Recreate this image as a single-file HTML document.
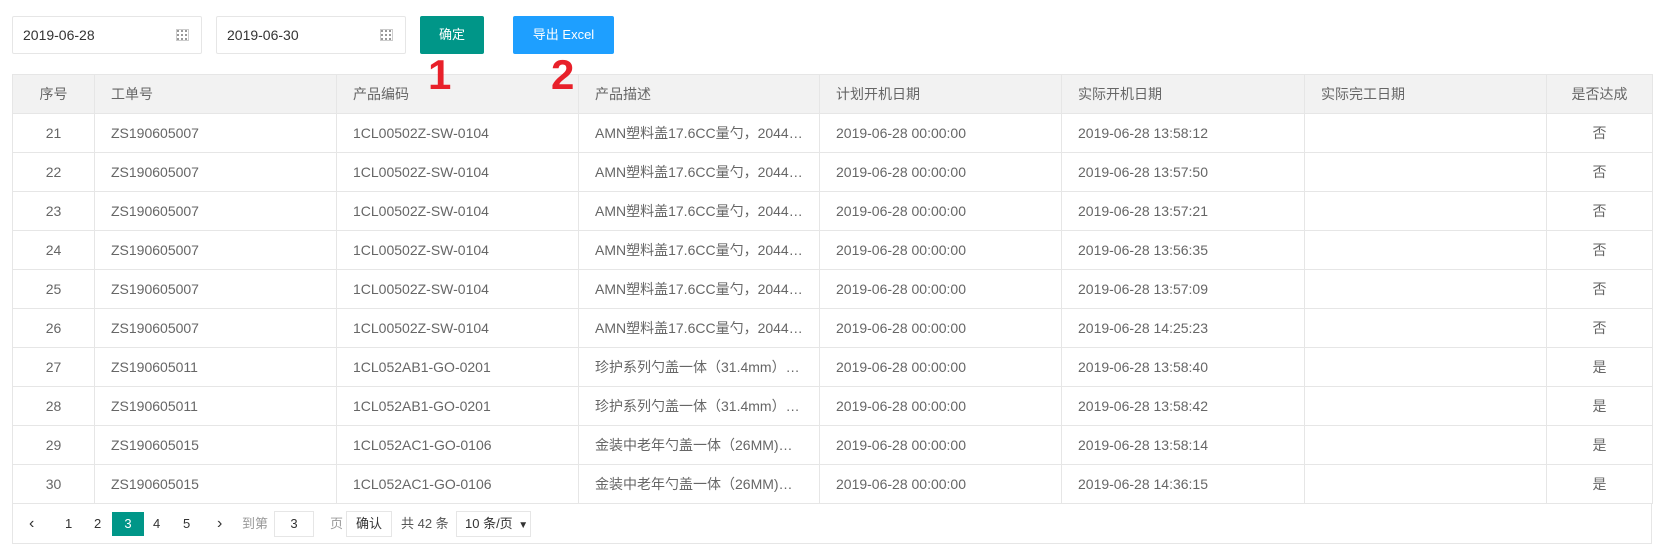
<!DOCTYPE html>
<html><head><meta charset="utf-8"><style>
*{box-sizing:border-box;margin:0;padding:0}
body{width:1666px;height:552px;background:#fff;font-family:"Liberation Sans","Noto Sans CJK SC",sans-serif;font-size:14px;color:#666;position:relative;overflow:hidden}
.abs{position:absolute}
.inp{border:1px solid #e6e6e6;height:38px;top:16px;color:#333;font-size:14px;line-height:36px;padding-left:10px;border-radius:2px}
.cal{position:absolute;right:12px;top:12px;width:13px;height:12px;border:1px solid #ccc;background:
 repeating-linear-gradient(90deg,transparent 0 2px,#fff 2px 4px),repeating-linear-gradient(0deg,#999 0 2px,#fff 2px 4px)}
.btn{top:16px;height:38px;color:#fff;font-size:13px;line-height:38px;text-align:center;border-radius:2px}
.num{color:#e8202a;font-weight:bold;font-size:42px;top:52px;line-height:46px;z-index:5}
table{position:absolute;left:12px;top:74px;width:1640px;border-collapse:collapse;table-layout:fixed}
td,th{border:1px solid #e6e6e6;height:39px;padding:0 16px;font-weight:normal;text-align:left;white-space:nowrap;overflow:hidden;text-overflow:ellipsis}
th{background:#f2f2f2}
.c{text-align:center}
.pg{position:absolute;left:12px;top:503px;width:1640px;height:41px;border:1px solid #e6e6e6;border-top:none}
.pi{position:absolute;top:9px;height:24px;line-height:24px;font-size:13px;color:#333;white-space:nowrap}
</style></head><body>
<div class="abs inp" style="left:12px;width:190px">2019-06-28<span class="cal"></span></div>
<div class="abs inp" style="left:216px;width:190px">2019-06-30<span class="cal"></span></div>
<div class="abs btn" style="left:420px;width:64px;background:#009688">确定</div>
<div class="abs btn" style="left:513px;width:101px;background:#1e9fff">导出 Excel</div>
<table>
<colgroup><col style="width:82px"><col style="width:242px"><col style="width:242px"><col style="width:241px"><col style="width:242px"><col style="width:243px"><col style="width:242px"><col style="width:106px"></colgroup>
<tr><th class="c">序号</th><th>工单号</th><th>产品编码</th><th>产品描述</th><th>计划开机日期</th><th>实际开机日期</th><th>实际完工日期</th><th class="c">是否达成</th></tr>
<tr><td class="c">21</td><td>ZS190605007</td><td>1CL00502Z-SW-0104</td><td>AMN塑料盖17.6CC量勺，2044…</td><td>2019-06-28 00:00:00</td><td>2019-06-28 13:58:12</td><td></td><td class="c">否</td></tr>
<tr><td class="c">22</td><td>ZS190605007</td><td>1CL00502Z-SW-0104</td><td>AMN塑料盖17.6CC量勺，2044…</td><td>2019-06-28 00:00:00</td><td>2019-06-28 13:57:50</td><td></td><td class="c">否</td></tr>
<tr><td class="c">23</td><td>ZS190605007</td><td>1CL00502Z-SW-0104</td><td>AMN塑料盖17.6CC量勺，2044…</td><td>2019-06-28 00:00:00</td><td>2019-06-28 13:57:21</td><td></td><td class="c">否</td></tr>
<tr><td class="c">24</td><td>ZS190605007</td><td>1CL00502Z-SW-0104</td><td>AMN塑料盖17.6CC量勺，2044…</td><td>2019-06-28 00:00:00</td><td>2019-06-28 13:56:35</td><td></td><td class="c">否</td></tr>
<tr><td class="c">25</td><td>ZS190605007</td><td>1CL00502Z-SW-0104</td><td>AMN塑料盖17.6CC量勺，2044…</td><td>2019-06-28 00:00:00</td><td>2019-06-28 13:57:09</td><td></td><td class="c">否</td></tr>
<tr><td class="c">26</td><td>ZS190605007</td><td>1CL00502Z-SW-0104</td><td>AMN塑料盖17.6CC量勺，2044…</td><td>2019-06-28 00:00:00</td><td>2019-06-28 14:25:23</td><td></td><td class="c">否</td></tr>
<tr><td class="c">27</td><td>ZS190605011</td><td>1CL052AB1-GO-0201</td><td>珍护系列勺盖一体（31.4mm）…</td><td>2019-06-28 00:00:00</td><td>2019-06-28 13:58:40</td><td></td><td class="c">是</td></tr>
<tr><td class="c">28</td><td>ZS190605011</td><td>1CL052AB1-GO-0201</td><td>珍护系列勺盖一体（31.4mm）…</td><td>2019-06-28 00:00:00</td><td>2019-06-28 13:58:42</td><td></td><td class="c">是</td></tr>
<tr><td class="c">29</td><td>ZS190605015</td><td>1CL052AC1-GO-0106</td><td>金装中老年勺盖一体（26MM)…</td><td>2019-06-28 00:00:00</td><td>2019-06-28 13:58:14</td><td></td><td class="c">是</td></tr>
<tr><td class="c">30</td><td>ZS190605015</td><td>1CL052AC1-GO-0106</td><td>金装中老年勺盖一体（26MM)…</td><td>2019-06-28 00:00:00</td><td>2019-06-28 14:36:15</td><td></td><td class="c">是</td></tr>
</table>
<div class="abs num" style="left:428px">1</div>
<div class="abs num" style="left:551px">2</div>
<div class="pg">
<span class="pi" style="left:16px;font-size:16px">&lsaquo;</span>
<span class="pi" style="left:52px">1</span>
<span class="pi" style="left:81px">2</span>
<span class="pi" style="left:99px;width:32px;background:#009688;color:#fff;text-align:center">3</span>
<span class="pi" style="left:140px">4</span>
<span class="pi" style="left:170px">5</span>
<span class="pi" style="left:204px;font-size:16px">&rsaquo;</span>
<span class="pi" style="left:229px;color:#999">到第</span>
<span class="pi" style="left:261px;width:40px;border:1px solid #e6e6e6;text-align:center;height:26px;top:8px">3</span>
<span class="pi" style="left:317px;color:#999">页</span>
<span class="pi" style="left:333px;width:46px;border:1px solid #e6e6e6;text-align:center;height:26px;top:8px">确认</span>
<span class="pi" style="left:388px;color:#555">共 42 条</span>
<span class="pi" style="left:443px;width:75px;border:1px solid #e6e6e6;padding-left:8px;height:26px;top:8px">10 条/页 <span style="font-size:10px;margin-left:2px">▼</span></span>
</div>
</body></html>
